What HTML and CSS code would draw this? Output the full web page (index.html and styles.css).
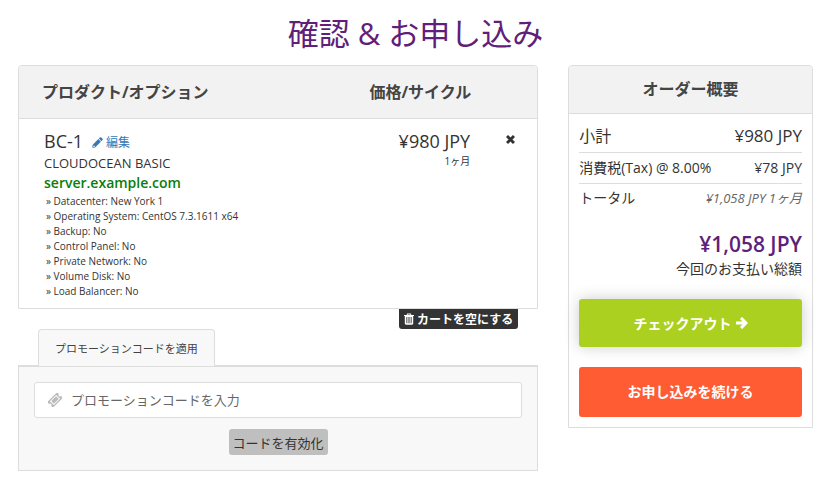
FILE: index.html
```html
<!DOCTYPE html>
<html lang="ja">
<head>
  <meta charset="UTF-8">
  <meta name="viewport" content="width=device-width, initial-scale=1.0">
  <title>確認 &amp; お申し込み</title>
  <link rel="stylesheet" href="styles.css">
</head>
<body>
  <h1>確認 &amp; お申し込み</h1>

  <div class="cart">
    <div class="cart-main">
      <table class="products">
        <thead>
          <tr>
            <th class="item">プロダクト/オプション</th>
            <th class="price">価格/サイクル</th>
            <th class="remove"></th>
          </tr>
        </thead>
        <tbody>
          <tr>
            <td class="item">
              <div class="item-title">
                <span>BC-1</span>
                <a href="#" class="edit">
                  <svg class="icon-pencil" viewBox="0 0 12 12"><path fill="currentColor" fill-rule="evenodd" d="M8.6.6a1.1 1.1 0 0 1 1.6 0l1.2 1.2a1.1 1.1 0 0 1 0 1.6l-1.1 1.1-2.8-2.8zM6.9 2.3l2.8 2.8L3.3 11.5.4 11.8l.2-3.1zM1.7 9.2l-.2 1.3.4.4 1.2-.2V9.9h-.7v-.7z"/></svg>
                  編集
                </a>
              </div>
              <div class="item-group">CLOUDOCEAN BASIC</div>
              <div class="item-domain">server.example.com</div>
              <ul class="item-options">
                <li>» Datacenter: New York 1</li>
                <li>» Operating System: CentOS 7.3.1611 x64</li>
                <li>» Backup: No</li>
                <li>» Control Panel: No</li>
                <li>» Private Network: No</li>
                <li>» Volume Disk: No</li>
                <li>» Load Balancer: No</li>
              </ul>
            </td>
            <td class="price">
              <div class="amount">¥980 JPY</div>
              <div class="cycle">1ヶ月</div>
            </td>
            <td class="remove">
              <button type="button" class="remove-btn" aria-label="削除">
                <svg class="icon-times" viewBox="0 0 8 8"><path fill="none" stroke="currentColor" stroke-width="2.6" d="M.9.9l6.2 6.2M7.1.9L.9 7.1"/></svg>
              </button>
            </td>
          </tr>
        </tbody>
      </table>

      <div class="empty-cart">
        <button type="button" class="empty-btn">
          <svg class="icon-trash" viewBox="0 0 10 12"><path fill="currentColor" fill-rule="evenodd" d="M3.2.6h3.6l.7 1.3H10v1.2h-.8v7.5c0 .7-.5 1.2-1.2 1.2H2c-.7 0-1.2-.5-1.2-1.2V3.1H0V1.9h2.5zM3.8 1.4l-.3.5h3l-.3-.5zM2.4 4v6.2h.9V4zM4.5 4v6.2h1V4zM6.7 4v6.2h.9V4z"/></svg>
          カートを空にする
        </button>
      </div>

      <div class="promo-tabs">
        <button type="button" class="promo-tab">プロモーションコードを適用</button>
      </div>
      <form class="promo">
        <label class="promo-field">
          <svg class="icon-ticket" viewBox="0 0 14 14"><g transform="rotate(-45 7 7)"><path fill="currentColor" fill-rule="evenodd" d="M0 3h14v2.6a1.4 1.4 0 0 0 0 2.8V11H0V8.4a1.4 1.4 0 0 0 0-2.8zM2.6 4.2v5.6h8.8V4.2z"/><path fill="currentColor" d="M3.6 5.1h6.8v3.8H3.6z"/></g></svg>
          <input type="text" placeholder="プロモーションコードを入力" aria-label="プロモーションコードを入力">
        </label>
        <button type="button" class="promo-btn">コードを有効化</button>
      </form>
    </div>

    <div class="summary">
      <h2>オーダー概要</h2>
      <div class="summary-body">
        <div class="row subtotal">
          <span>小計</span>
          <span class="subtotal-amount">¥980 JPY</span>
        </div>
        <div class="row">
          <span>消費税(Tax) @ 8.00%</span>
          <span>¥78 JPY</span>
        </div>
        <div class="row last">
          <span>トータル</span>
          <span class="recurring">¥1,058 JPY 1ヶ月</span>
        </div>
        <div class="total">¥1,058 JPY</div>
        <div class="total-label">今回のお支払い総額</div>
        <button type="button" class="btn checkout">
          チェックアウト
          <svg class="icon-arrow" viewBox="0 0 12 12"><path fill="none" stroke="currentColor" stroke-width="3" d="M0 6h10M5 1L10 6l-5 5"/></svg>
        </button>
        <a href="#" class="btn continue">お申し込みを続ける</a>
      </div>
    </div>
  </div>
</body>
</html>
```
FILE: styles.css
```css
* {
  box-sizing: border-box;
}

body {
  margin: 0;
  padding: 15px 18px;
  background: #fff;
  color: #333;
  font-family: "Open Sans", "Noto Sans CJK JP", sans-serif;
  font-size: 14px;
  line-height: 20px;
}

button,
input {
  font-family: inherit;
}

button {
  cursor: pointer;
}

a {
  text-decoration: none;
}

h1 {
  margin: 0 0 14px;
  color: #5f1f7a;
  font-size: 31px;
  font-weight: 400;
  line-height: 36px;
  text-align: center;
}

.cart {
  display: grid;
  grid-template-columns: 17fr 8fr;
  gap: 30px;
  align-items: start;
}

/* Products */
.products {
  width: 100%;
  border: 1px solid #ddd;
  border-radius: 4px 4px 0 0;
  border-spacing: 0;
}

.products th {
  height: 53px;
  padding: 0;
  background: #f2f2f2;
  border-bottom: 1px solid #ddd;
  color: #444;
  font-size: 16px;
  font-weight: 700;
}

.products th:first-child {
  border-top-left-radius: 4px;
}

.products th:last-child {
  border-top-right-radius: 4px;
}

.products td {
  padding: 10px 0 9px;
  vertical-align: top;
}

.products .item {
  padding-left: 25px;
  text-align: left;
}

.products th.item {
  padding-left: 23px;
}

.products .price {
  text-align: right;
}

.products td.price {
  padding-right: 1px;
}

.products .remove {
  width: 66px;
  padding-left: 12px;
  text-align: center;
}

.item-title {
  display: flex;
  align-items: baseline;
  gap: 9px;
  font-size: 18px;
  line-height: 24px;
}

.edit {
  display: flex;
  align-items: center;
  gap: 3px;
  color: #337ab7;
  font-size: 12px;
  line-height: 18px;
}

.icon-pencil {
  width: 11px;
  height: 11px;
}

.item-group {
  font-size: 13px;
}

.item-domain {
  color: #0a7d0a;
  font-weight: 600;
}

.item-options {
  margin: 0;
  padding: 1px 0 0 2px;
  list-style: none;
  font-size: 10px;
  line-height: 15px;
}

.amount {
  font-size: 18px;
  line-height: 24px;
}

.cycle {
  font-size: 10px;
  line-height: 16px;
}

.remove-btn {
  padding: 5px;
  border: 0;
  background: none;
  color: #333;
  line-height: 0;
}

.icon-times {
  width: 9px;
  height: 9px;
}

.empty-cart {
  display: flex;
  justify-content: flex-end;
  padding-right: 20px;
}

.empty-btn {
  display: flex;
  align-items: center;
  gap: 3px;
  height: 20px;
  padding: 0 5px;
  border: 0;
  border-radius: 0 0 3px 3px;
  background: #333;
  color: #fff;
  font-size: 12px;
  font-weight: 700;
}

.icon-trash {
  width: 10px;
  height: 12px;
}

/* Promotion code */
.promo-tabs {
  display: flex;
  padding: 0 20px;
  border-bottom: 1px solid #ddd;
}

.promo-tab {
  height: 37px;
  margin-bottom: -1px;
  padding: 0 16px;
  border: 1px solid #ddd;
  border-bottom: 0;
  border-radius: 4px 4px 0 0;
  background: #f8f8f8;
  color: #444;
  font-size: 11px;
}

.promo {
  display: flex;
  flex-direction: column;
  align-items: center;
  gap: 11px;
  padding: 15px;
  border: 1px solid #ddd;
  background: #f8f8f8;
}

.promo-field {
  display: flex;
  align-items: center;
  gap: 9px;
  width: 100%;
  height: 36px;
  padding: 0 13px;
  border: 1px solid #ddd;
  border-radius: 3px;
  background: #fff;
}

.promo-field input {
  flex: 1;
  min-width: 0;
  padding: 0;
  border: 0;
  outline: 0;
  background: none;
  font-size: 13px;
}

.promo-field input::placeholder {
  color: #666;
}

.icon-ticket {
  width: 14px;
  height: 14px;
  color: #bbb;
}

.promo-btn {
  height: 26px;
  padding: 0 4px;
  border: 0;
  border-radius: 3px;
  background: #bfbfbf;
  color: #333;
  font-size: 13px;
}

/* Order summary */
.summary {
  border: 1px solid #ddd;
  border-radius: 4px 4px 0 0;
}

.summary h2 {
  margin: 0;
  padding: 11px 0;
  border-bottom: 1px solid #ddd;
  border-radius: 4px 4px 0 0;
  background: #f2f2f2;
  color: #444;
  font-size: 16px;
  font-weight: 700;
  line-height: 25px;
  text-align: center;
}

.summary-body {
  padding: 0 10px 10px;
}

.row {
  display: flex;
  align-items: center;
  justify-content: space-between;
  height: 31px;
  border-bottom: 1px solid #ddd;
}

.last {
  height: 28px;
  border-bottom: 0;
}

.subtotal {
  height: 39px;
  padding-top: 5px;
  font-size: 16px;
}

.subtotal-amount {
  font-size: 17px;
}

.recurring {
  color: #666;
  font-size: 13px;
  font-style: italic;
}

.total {
  margin-top: 17px;
  color: #5f1f7a;
  font-size: 21px;
  font-weight: 600;
  line-height: 30px;
  text-align: right;
}

.total-label {
  margin-bottom: 20px;
  text-align: right;
}

.btn {
  display: flex;
  align-items: center;
  justify-content: center;
  gap: 4px;
  width: 100%;
  height: 48px;
  border: 0;
  border-radius: 3px;
  color: #fff;
  font-size: 14px;
  font-weight: 700;
}

.checkout {
  margin-bottom: 20px;
  background: #abd020;
  box-shadow: 0 0 15px rgba(0, 0, 0, 0.2);
}

.continue {
  height: 50px;
  background: #ff5c33;
}

.icon-arrow {
  width: 12px;
  height: 12px;
}
```
